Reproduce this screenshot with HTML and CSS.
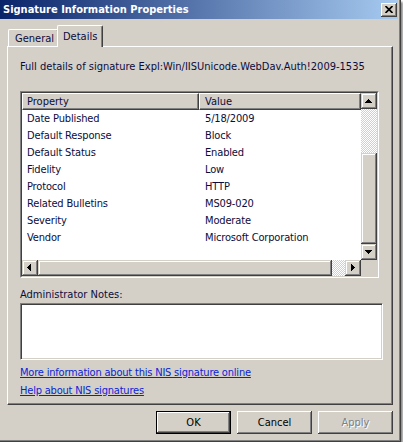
FILE: index.html
```html
<!DOCTYPE html>
<html>
<head>
<meta charset="utf-8">
<title>Signature Information Properties</title>
<link rel="stylesheet" href="styles.css">
</head>
<body>
<div class="window">
  <div class="titlebar">
    <span class="title">Signature Information Properties</span>
    <span class="close"><svg width="8" height="7" viewBox="0 0 8 7"><path d="M0.5 0 L7.5 7 M7.5 0 L0.5 7" stroke="#000" stroke-width="1.7"/></svg></span>
  </div>
  <div class="tabs">
    <div class="tab">General</div>
    <div class="tab active">Details</div>
  </div>
  <div class="panel">
    <div class="caption">Full details of signature Expl:Win/IISUnicode.WebDav.Auth!2009-1535</div>
    <div class="list">
      <div class="list-inner">
        <div class="view">
          <div class="header">
            <div class="hcell h1">Property</div>
            <div class="hcell h2">Value</div>
          </div>
          <div class="row"><span class="c1">Date Published</span><span class="c2">5/18/2009</span></div>
          <div class="row"><span class="c1">Default Response</span><span class="c2">Block</span></div>
          <div class="row"><span class="c1">Default Status</span><span class="c2">Enabled</span></div>
          <div class="row"><span class="c1">Fidelity</span><span class="c2">Low</span></div>
          <div class="row"><span class="c1">Protocol</span><span class="c2">HTTP</span></div>
          <div class="row"><span class="c1">Related Bulletins</span><span class="c2">MS09-020</span></div>
          <div class="row"><span class="c1">Severity</span><span class="c2">Moderate</span></div>
          <div class="row"><span class="c1">Vendor</span><span class="c2">Microsoft Corporation</span></div>
        </div>
        <div class="vscroll">
          <div class="sbtn"><svg width="16" height="16" viewBox="0 0 16 16"><path d="M7 6h1v1h1v1h1v1h1v1H4V9h1V8h1V7h1z"/></svg></div>
          <div class="track vt"></div>
          <div class="thumb vthumb"></div>
          <div class="sbtn"><svg width="16" height="16" viewBox="0 0 16 16"><path d="M4 6h7v1h-1v1h-1v1h-1v1H7V9H6V8H5V7H4z"/></svg></div>
        </div>
        <div class="hscroll">
          <div class="sbtn"><svg width="16" height="16" viewBox="0 0 16 16"><path d="M9 4v7H8v-1H7V9H6V8H5V7h1V6h1V5h1V4z"/></svg></div>
          <div class="thumb hthumb"></div>
          <div class="track ht"></div>
          <div class="sbtn"><svg width="16" height="16" viewBox="0 0 16 16"><path d="M6 4v7h1v-1h1V9h1V8h1V7H9V6H8V5H7V4z"/></svg></div>
        </div>
        <div class="corner"></div>
      </div>
    </div>
    <div class="label">Administrator Notes:</div>
    <div class="notes"></div>
    <a class="link first" href="#">More information about this NIS signature online</a>
    <a class="link" href="#">Help about NIS signatures</a>
  </div>
  <div class="buttons">
    <div class="btn default">OK</div>
    <div class="btn">Cancel</div>
    <div class="btn disabled">Apply</div>
  </div>
</div>
</body>
</html>
```
FILE: styles.css
```css
* { box-sizing: border-box; }
html, body { margin: 0; padding: 0; background: #fff; }
body {
  font-family: "DejaVu Sans Condensed", "DejaVu Sans", sans-serif;
  font-size: 11px;
  line-height: 13px;
  color: #0c0c3c;
}
.window {
  width: 401px;
  height: 442px;
  padding-right: 3px;
  background: #d4d0c8;
  box-shadow: inset -1px -1px #404040, inset -2px -2px #808080, 2px 2px 2px rgba(0,0,0,0.45);
}
.titlebar {
  display: flex;
  align-items: center;
  justify-content: space-between;
  height: 19px;
  padding: 0 1px 0 3px;
  background: linear-gradient(to right, #0a246a, #a6caf0);
}
.title { color: #fff; font-weight: bold; }
.close {
  width: 16px;
  height: 14px;
  display: flex;
  align-items: center;
  justify-content: center;
  background: #d4d0c8;
  box-shadow: inset -1px -1px #404040, inset 1px 1px #fff, inset -2px -2px #808080;
}
.close svg { display: block; }
.tabs {
  display: flex;
  align-items: flex-end;
  margin: 6px 0 0 8px;
}
.tab {
  height: 17px;
  width: 51px;
  padding: 2px 0 0 6px;
  border-top: 1px solid #fff;
  border-left: 1px solid #fff;
  border-right: 1px solid #404040;
  border-radius: 2px 2px 0 0;
  box-shadow: inset -1px 0 #808080;
  white-space: nowrap;
}
.tab.active {
  position: relative;
  z-index: 1;
  width: 46px;
  height: 22px;
  margin-left: -2px;
  margin-bottom: -1px;
  padding: 4px 0 0 5px;
  background: #d4d0c8;
}
.panel {
  margin-left: 7px;
  width: 386px;
  height: 359px;
  border-top: 1px solid #fff;
  border-left: 1px solid #fff;
  border-right: 1px solid #404040;
  border-bottom: 1px solid #404040;
  box-shadow: inset -1px -1px #808080;
  padding: 13px 0 0 12px;
}
.caption { height: 13px; white-space: nowrap; }
.list {
  margin-top: 18px;
  width: 359px;
  height: 187px;
  border-top: 1px solid #808080;
  border-left: 1px solid #808080;
  border-right: 1px solid #fff;
  border-bottom: 1px solid #fff;
}
.list-inner {
  height: 100%;
  border-top: 1px solid #404040;
  border-left: 1px solid #404040;
  border-right: 1px solid #d4d0c8;
  border-bottom: 1px solid #d4d0c8;
  background: #fff;
  display: grid;
  grid-template-columns: 339px 16px;
  grid-template-rows: 167px 16px;
}
.view { overflow: hidden; }
.header { display: flex; height: 17px; }
.hcell {
  height: 17px;
  line-height: 15px;
  background: #d4d0c8;
  border-top: 1px solid #fff;
  border-left: 1px solid #fff;
  border-right: 1px solid #404040;
  border-bottom: 1px solid #404040;
  box-shadow: inset -1px -1px #808080;
}
.h1 { width: 177px; padding-left: 4px; }
.h2 { flex: 1; padding-left: 5px; }
.row { display: flex; height: 17px; line-height: 17px; white-space: nowrap; letter-spacing: -0.15px; }
.c1 { width: 177px; padding-left: 5px; }
.c2 { padding-left: 6px; }
.vscroll { display: flex; flex-direction: column; }
.hscroll { display: flex; }
.sbtn {
  width: 16px;
  height: 16px;
  flex: none;
  background: #d4d0c8;
  box-shadow: inset -1px -1px #404040, inset 1px 1px #d4d0c8, inset -2px -2px #808080, inset 2px 2px #fff;
}
.sbtn svg { display: block; fill: #000; }
.track {
  background: repeating-conic-gradient(#d4d0c8 0 25%, #fff 0 50%) 0 0 / 2px 2px;
}
.vt { height: 44px; }
.ht { width: 13px; }
.thumb {
  background: #d4d0c8;
  box-shadow: inset -1px -1px #404040, inset 1px 1px #d4d0c8, inset -2px -2px #808080, inset 2px 2px #fff;
}
.vthumb { height: 91px; }
.hthumb { width: 294px; }
.corner { background: #d4d0c8; }
.label { margin-top: 10px; height: 13px; }
.notes {
  margin-top: 2px;
  width: 363px;
  height: 57px;
  background: #fff;
  border-top: 1px solid #808080;
  border-left: 1px solid #808080;
  border-right: 1px solid #fff;
  border-bottom: 1px solid #fff;
  box-shadow: inset 1px 1px #404040, inset -1px -1px #d4d0c8;
}
.link {
  display: block;
  width: max-content;
  margin-top: 5px;
  color: #0a1fd6;
  text-decoration: underline;
  letter-spacing: -0.2px;
}
.link.first { margin-top: 6px; }
.buttons {
  display: flex;
  justify-content: flex-end;
  gap: 6px;
  margin: 6px 0 0 7px;
  width: 386px;
}
.btn {
  width: 75px;
  height: 23px;
  display: flex;
  align-items: center;
  justify-content: center;
  background: #d4d0c8;
  color: #000;
  box-shadow: inset -1px -1px #404040, inset 1px 1px #fff, inset -2px -2px #808080, inset 2px 2px #d4d0c8;
}
.btn.default { border: 1px solid #000; }
.btn.disabled { color: #808080; text-shadow: 1px 1px #fff; }
```
